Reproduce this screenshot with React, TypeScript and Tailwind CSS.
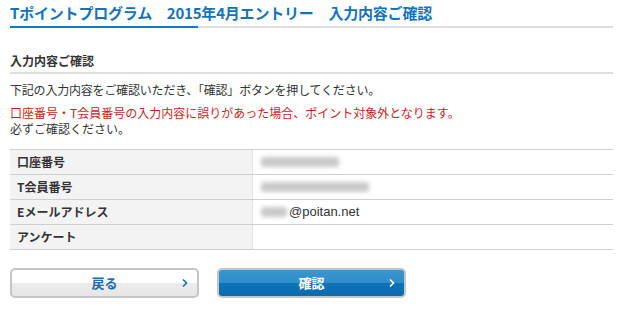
import { ReactNode } from "react";

const jp = { fontFamily: '"Noto Sans CJK JP", "Noto Sans", sans-serif' };

function Chevron({ color }: { color: string }) {
  return (
    <svg width="6" height="9" viewBox="0 0 6 9" className="absolute right-[9px] top-1/2 -translate-y-1/2">
      <path d="M1 1 L4.5 4.5 L1 8" fill="none" stroke={color} strokeWidth="1.6" />
    </svg>
  );
}

function Blur({ w }: { w: number }) {
  return <div className="h-[10px] rounded-[3px] bg-[#c9c9c9] blur-[2px]" style={{ width: w }} />;
}

function Row({ label, children }: { label: string; children?: ReactNode }) {
  return (
    <div className="flex h-[25px] border-b border-[#cfcfcf]">
      <div className="flex w-[243px] items-center border-r border-dotted border-[#d8d8d8] bg-[#f3f3f3] pl-[7px] text-[12px] font-bold text-[#333]">
        {label}
      </div>
      <div className="flex flex-1 items-center pl-[8px]">{children}</div>
    </div>
  );
}

export default function App() {
  return (
    <div className="min-h-[313px] w-[620px] bg-white" style={jp}>
      <div className="ml-[10px] w-[603px]">
        {/* Title */}
        <h1 className="pt-[3px] text-[15px] font-bold leading-[20px] tracking-[-0.2px] text-[#1273b8]">
          Tポイントプログラム　2015年4月エントリー　入力内容ご確認
        </h1>
        <div className="mt-[3px] flex">
          <div className="h-[2px] w-[188px] bg-[#0f7cc4]" />
          <div className="h-[2px] flex-1 bg-[#dedede]" />
        </div>

        {/* Section */}
        <h2 className="mt-[25px] text-[12px] font-bold leading-[16px] text-[#333]">入力内容ご確認</h2>
        <div className="mt-[3px] h-[2px] bg-[#dedede]" />

        <p className="mt-[8px] text-[12px] leading-[16px] tracking-[-0.2px] text-[#333]">
          下記の入力内容をご確認いただき、「確認」ボタンを押してください。
        </p>
        <p className="mt-[7px] text-[12px] leading-[16px] text-[#cc1d1d]">
          口座番号・T会員番号の入力内容に誤りがあった場合、ポイント対象外となります。
        </p>
        <p className="text-[12px] leading-[16px] text-[#333]">必ずご確認ください。</p>

        {/* Table */}
        <div className="mt-[12px] border-t border-[#cfcfcf]">
          <Row label="口座番号">
            <Blur w={78} />
          </Row>
          <Row label="T会員番号">
            <Blur w={108} />
          </Row>
          <Row label="Eメールアドレス">
            <Blur w={26} />
            <span className="ml-[2px] text-[13px] text-[#333]" style={{ fontFamily: '"Liberation Sans", Arial, sans-serif' }}>
              @poitan.net
            </span>
          </Row>
          <Row label="アンケート" />
        </div>

        {/* Buttons */}
        <div className="mt-[18px] flex gap-[18px]">
          <button className="relative h-[30px] w-[189px] rounded-[5px] border-2 border-[#c6c6c6] bg-[linear-gradient(#ffffff_0%,#ffffff_50%,#ececec_50%,#e6e6e6_100%)] text-[13px] font-bold text-[#1a6cae]">
            戻る
            <Chevron color="#1a6cae" />
          </button>
          <button className="relative h-[30px] w-[189px] rounded-[5px] border-2 border-[#c6c6c6] bg-[linear-gradient(#3a96d0_0%,#2f8dca_50%,#0d72b6_50%,#0a6cb0_100%)] text-[13px] font-bold text-white">
            確認
            <Chevron color="#ffffff" />
          </button>
        </div>
      </div>
    </div>
  );
}
